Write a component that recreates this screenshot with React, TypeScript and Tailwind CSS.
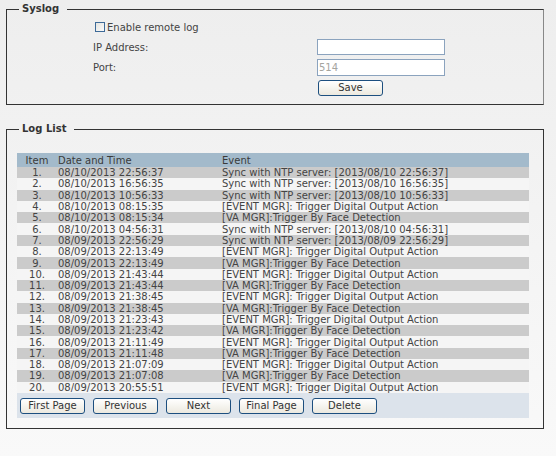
import React from "react";

type Row = { d: string; e: string };

const EV = "[EVENT MGR]: Trigger Digital Output Action";
const VA = "[VA MGR]:Trigger By Face Detection";

const rows: Row[] = [
  { d: "08/10/2013 22:56:37", e: "Sync with NTP server: [2013/08/10 22:56:37]" },
  { d: "08/10/2013 16:56:35", e: "Sync with NTP server: [2013/08/10 16:56:35]" },
  { d: "08/10/2013 10:56:33", e: "Sync with NTP server: [2013/08/10 10:56:33]" },
  { d: "08/10/2013 08:15:35", e: EV },
  { d: "08/10/2013 08:15:34", e: VA },
  { d: "08/10/2013 04:56:31", e: "Sync with NTP server: [2013/08/10 04:56:31]" },
  { d: "08/09/2013 22:56:29", e: "Sync with NTP server: [2013/08/09 22:56:29]" },
  { d: "08/09/2013 22:13:49", e: EV },
  { d: "08/09/2013 22:13:49", e: VA },
  { d: "08/09/2013 21:43:44", e: EV },
  { d: "08/09/2013 21:43:44", e: VA },
  { d: "08/09/2013 21:38:45", e: EV },
  { d: "08/09/2013 21:38:45", e: VA },
  { d: "08/09/2013 21:23:43", e: EV },
  { d: "08/09/2013 21:23:42", e: VA },
  { d: "08/09/2013 21:11:49", e: EV },
  { d: "08/09/2013 21:11:48", e: VA },
  { d: "08/09/2013 21:07:09", e: EV },
  { d: "08/09/2013 21:07:08", e: VA },
  { d: "08/09/2013 20:55:51", e: EV },
];

function Btn({ label }: { label: string }) {
  return (
    <button className="w-[65px] h-[16px] rounded-[3px] border border-[#1d4f7f] bg-gradient-to-b from-[#ffffff] to-[#ece9df] text-[10px] leading-[14px] text-[#333]">
      {label}
    </button>
  );
}

export default function App() {
  return (
    <div
      className="w-[556px] min-h-[456px] bg-gradient-to-b from-[#eeeeee] to-[#f9f9f9] pt-[3px] text-[10px] text-[#444]"
      style={{ fontFamily: '"DejaVu Sans", Verdana, sans-serif' }}
    >
      <fieldset className="ml-[6px] w-[538px] border border-[#333] border-r-[#888]">
        <legend className="ml-[12px] pl-[3px] pr-[8px] font-bold text-[10px] leading-[12px] text-[#333]">
          Syslog
        </legend>
        <div className="pl-[86px] pt-[6px] pb-[8px]">
          <div className="flex items-center h-[12px] pl-[2px]">
            <span className="w-[10px] h-[10px] border border-[#3d6a98] bg-gradient-to-br from-[#e4e4e0] to-[#fbfbfb]" />
            <span className="ml-[2px]">Enable remote log</span>
          </div>
          <div className="flex items-center h-[16px] mt-[6px]">
            <span className="w-[224px]">IP Address:</span>
            <div className="w-[128px] h-[16px] border border-[#8ba3be] bg-white" />
          </div>
          <div className="flex items-center h-[17px] mt-[4px]">
            <span className="w-[224px]">Port:</span>
            <div className="w-[128px] h-[17px] border border-[#8ba3be] bg-white pl-[1px] leading-[15px] text-[#a5a5a0]">
              514
            </div>
          </div>
          <div className="flex h-[16px] mt-[4px] pl-[225px]">
            <Btn label="Save" />
          </div>
        </div>
      </fieldset>

      <fieldset className="ml-[6px] mt-[18px] w-[538px] border border-[#333]">
        <legend className="ml-[12px] pl-[3px] pr-[8px] font-bold text-[10px] leading-[12px] text-[#333]">
          Log List
        </legend>
        <div className="pl-[10px] pr-[14px] pt-[18px] pb-[10px]">
          <div className="w-[512px]">
            <div className="flex h-[14px] items-center bg-[#a3bacb] text-[#3a3a3a]">
              <span className="w-[40px] text-center">Item</span>
              <span className="w-[165px] pl-[1px]">Date and Time</span>
              <span className="flex-1">Event</span>
            </div>
            {rows.map((r, i) => (
              <div
                key={i}
                className={
                  "flex h-[11.3px] items-center leading-[11px] " +
                  (i % 2 === 0 ? "bg-[#cbcbcb]" : "bg-[#f5f5f5]")
                }
              >
                <span className="w-[40px] text-center">{i + 1}.</span>
                <span className="w-[165px] pl-[1px]">{r.d}</span>
                <span className="flex-1 whitespace-nowrap">{r.e}</span>
              </div>
            ))}
            <div className="flex gap-[8px] bg-[#dce3eb] pl-[3px] pt-[5px] pb-[4px]">
              <Btn label="First Page" />
              <Btn label="Previous" />
              <Btn label="Next" />
              <Btn label="Final Page" />
              <Btn label="Delete" />
            </div>
          </div>
        </div>
      </fieldset>
    </div>
  );
}
